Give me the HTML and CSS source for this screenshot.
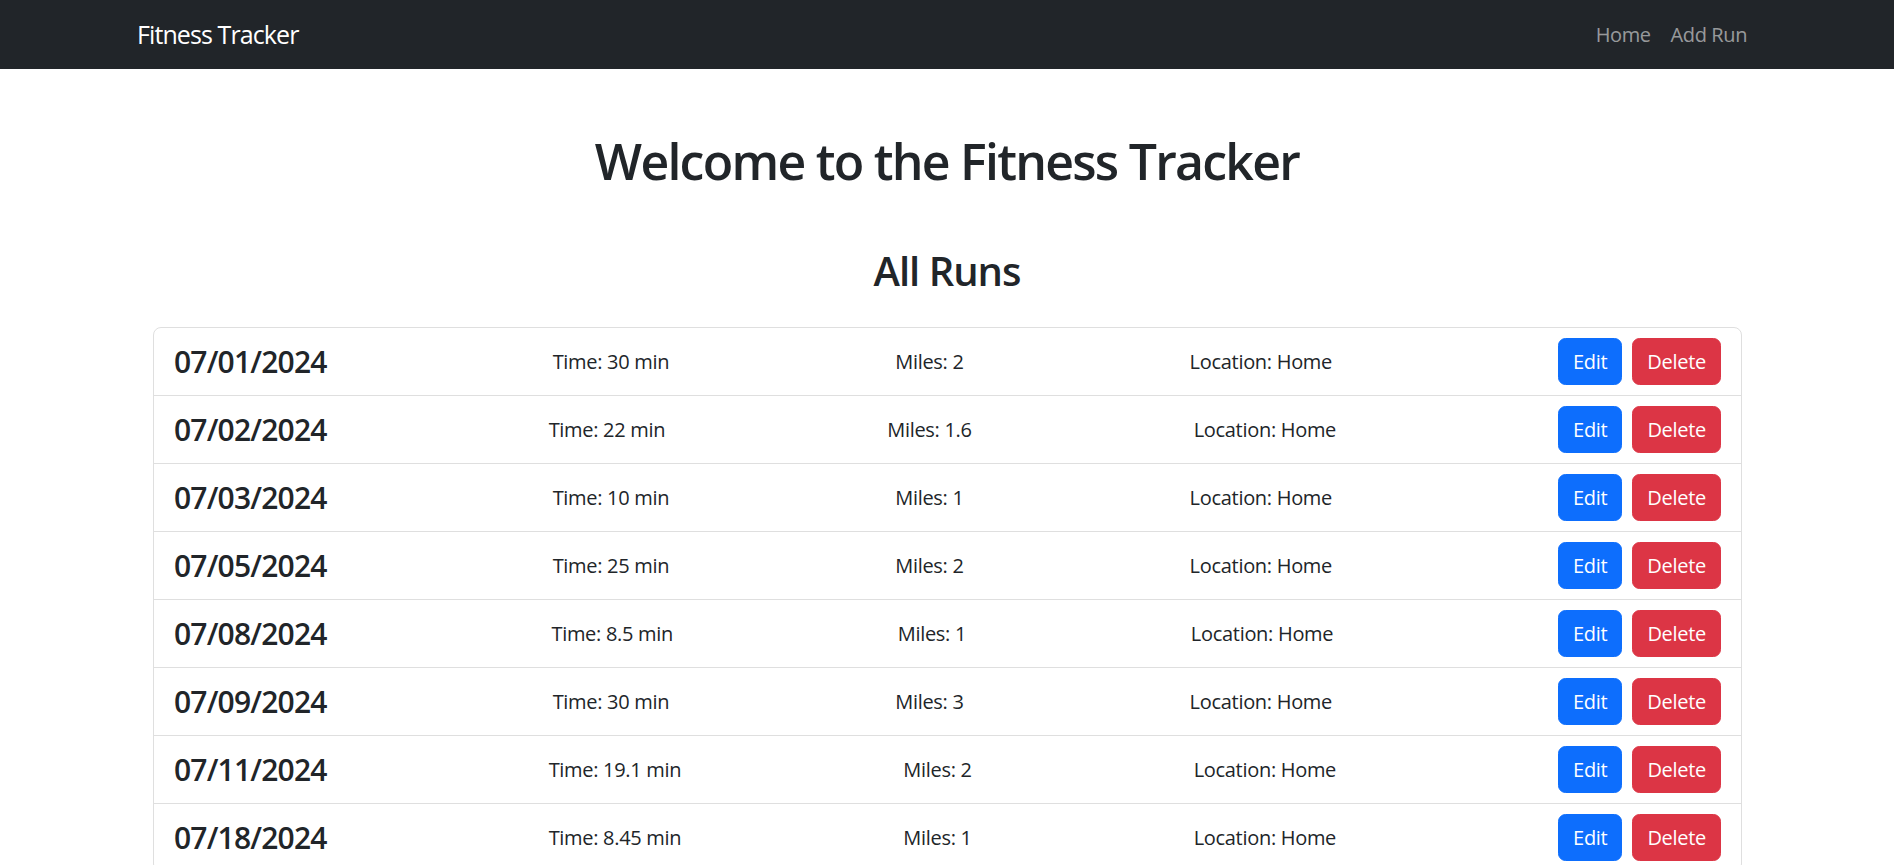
FILE: index.html
```html
<!DOCTYPE html>
<html lang="en">
<head>
<meta charset="utf-8">
<title>Fitness Tracker</title>
<link rel="stylesheet" href="styles.css">
</head>
<body>
<nav class="navbar">
  <div class="container nav-inner">
    <a class="brand" href="#">Fitness Tracker</a>
    <ul class="nav-links">
      <li><a href="#">Home</a></li>
      <li><a href="#">Add Run</a></li>
    </ul>
  </div>
</nav>
<main class="container">
  <h1 class="title">Welcome to the Fitness Tracker</h1>
  <h2 class="subtitle">All Runs</h2>
  <ul class="run-list">
    <li class="run">
      <h4 class="run-date">07/01/2024</h4>
      <span class="run-field">Time: 30 min</span>
      <span class="run-field">Miles: 2</span>
      <span class="run-field">Location: Home</span>
      <div class="run-actions"><button class="btn btn-edit">Edit</button><button class="btn btn-delete">Delete</button></div>
    </li>
    <li class="run">
      <h4 class="run-date">07/02/2024</h4>
      <span class="run-field">Time: 22 min</span>
      <span class="run-field">Miles: 1.6</span>
      <span class="run-field">Location: Home</span>
      <div class="run-actions"><button class="btn btn-edit">Edit</button><button class="btn btn-delete">Delete</button></div>
    </li>
    <li class="run">
      <h4 class="run-date">07/03/2024</h4>
      <span class="run-field">Time: 10 min</span>
      <span class="run-field">Miles: 1</span>
      <span class="run-field">Location: Home</span>
      <div class="run-actions"><button class="btn btn-edit">Edit</button><button class="btn btn-delete">Delete</button></div>
    </li>
    <li class="run">
      <h4 class="run-date">07/05/2024</h4>
      <span class="run-field">Time: 25 min</span>
      <span class="run-field">Miles: 2</span>
      <span class="run-field">Location: Home</span>
      <div class="run-actions"><button class="btn btn-edit">Edit</button><button class="btn btn-delete">Delete</button></div>
    </li>
    <li class="run">
      <h4 class="run-date">07/08/2024</h4>
      <span class="run-field">Time: 8.5 min</span>
      <span class="run-field">Miles: 1</span>
      <span class="run-field">Location: Home</span>
      <div class="run-actions"><button class="btn btn-edit">Edit</button><button class="btn btn-delete">Delete</button></div>
    </li>
    <li class="run">
      <h4 class="run-date">07/09/2024</h4>
      <span class="run-field">Time: 30 min</span>
      <span class="run-field">Miles: 3</span>
      <span class="run-field">Location: Home</span>
      <div class="run-actions"><button class="btn btn-edit">Edit</button><button class="btn btn-delete">Delete</button></div>
    </li>
    <li class="run">
      <h4 class="run-date">07/11/2024</h4>
      <span class="run-field">Time: 19.1 min</span>
      <span class="run-field">Miles: 2</span>
      <span class="run-field">Location: Home</span>
      <div class="run-actions"><button class="btn btn-edit">Edit</button><button class="btn btn-delete">Delete</button></div>
    </li>
    <li class="run">
      <h4 class="run-date">07/18/2024</h4>
      <span class="run-field">Time: 8.45 min</span>
      <span class="run-field">Miles: 1</span>
      <span class="run-field">Location: Home</span>
      <div class="run-actions"><button class="btn btn-edit">Edit</button><button class="btn btn-delete">Delete</button></div>
    </li>
  </ul>
</main>
</body>
</html>
```
FILE: styles.css
```css
* { box-sizing: border-box; }
html, body { margin: 0; padding: 0; }
body {
  font-family: "Open Sans", "Noto Sans", "Liberation Sans", sans-serif;
  font-size: 20px;
  line-height: 1.5;
  color: #212529;
  background: #fff;
}
.container {
  width: 1650px;
  margin: 0 auto;
  padding: 0 15px;
}
.navbar {
  background: #212529;
  height: 69px;
}
.nav-inner {
  height: 100%;
  display: flex;
  align-items: center;
  justify-content: space-between;
}
.brand {
  color: #fff;
  text-decoration: none;
  font-size: 25px;
  line-height: 1.5;
  letter-spacing: -0.9px;
}
.nav-links {
  list-style: none;
  margin: 0;
  padding: 0;
  display: flex;
}
.nav-links a {
  display: block;
  padding: 0 10px;
  color: rgba(255, 255, 255, 0.55);
  text-decoration: none;
  font-size: 20px;
  letter-spacing: -0.4px;
}
.title {
  margin: 62px 0 0;
  text-align: center;
  font-size: 50px;
  font-weight: 600;
  line-height: 60px;
  letter-spacing: -1.75px;
}
.subtitle {
  margin: 56px 0 0;
  text-align: center;
  font-size: 40px;
  font-weight: 600;
  line-height: 48px;
  letter-spacing: -1px;
}
.run-list {
  list-style: none;
  margin: 32px 15px 0 16px;
  padding: 0;
  border: 1px solid #dfdfdf;
  border-radius: 8px;
}
.run {
  display: flex;
  align-items: center;
  justify-content: space-between;
  height: 68px;
  padding: 0 20px;
  border-top: 1px solid #dfdfdf;
}
.run:first-child { border-top: 0; height: 67px; }
.run-date {
  margin: 0;
  font-size: 30px;
  font-weight: 600;
  line-height: 1.2;
  letter-spacing: -0.8px;
}
.run-field {
  font-size: 20px;
  letter-spacing: -0.3px;
}
.run-actions {
  display: flex;
  gap: 10px;
}
.btn {
  font-family: inherit;
  font-size: 20px;
  line-height: 30px;
  height: 47px;
  padding: 0 14px;
  border: 1px solid transparent;
  border-radius: 7.5px;
  color: #fff;
  cursor: pointer;
  letter-spacing: -0.3px;
}
.btn-edit { background: #0d6efd; border-color: #0d6efd; }
.btn-delete { background: #dc3545; border-color: #dc3545; }
```
